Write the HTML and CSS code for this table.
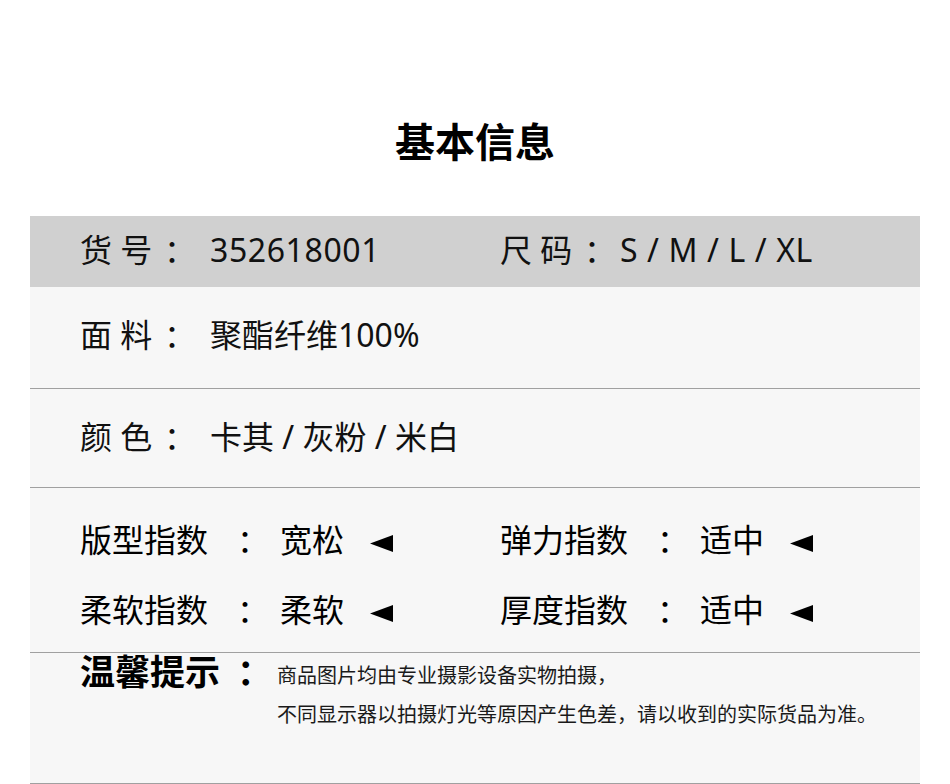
FILE: index.html
```html
<!DOCTYPE html>
<html lang="zh-CN">
<head>
<meta charset="utf-8">
<title>基本信息</title>
<link rel="stylesheet" href="styles.css">
</head>
<body>
<div class="page">
  <h1 class="title">基本信息</h1>
  <div class="panel">
    <div class="row row-head">
      <div class="cell cell-left">
        <span class="key">货 号</span><span class="colon">：</span><span class="val num">352618001</span>
      </div>
      <div class="cell">
        <span class="key">尺 码</span><span class="colon colon-tight">：</span><span class="val num">S / M / L / XL</span>
      </div>
    </div>
    <div class="row row-material">
      <span class="key">面 料</span><span class="colon">：</span><span class="val">聚酯纤维100%</span>
    </div>
    <div class="row row-color">
      <span class="key">颜 色</span><span class="colon">：</span><span class="val">卡其 / 灰粉 / 米白</span>
    </div>
    <div class="index">
      <div class="idx">
        <span class="idx-key">版型指数</span><span class="idx-colon">：</span><span class="idx-val">宽松</span>
        <svg class="arrow" width="23" height="17" viewBox="0 0 23 17"><polygon points="0,8.5 23,0 23,17"/></svg>
      </div>
      <div class="idx">
        <span class="idx-key">弹力指数</span><span class="idx-colon">：</span><span class="idx-val">适中</span>
        <svg class="arrow" width="23" height="17" viewBox="0 0 23 17"><polygon points="0,8.5 23,0 23,17"/></svg>
      </div>
      <div class="idx">
        <span class="idx-key">柔软指数</span><span class="idx-colon">：</span><span class="idx-val">柔软</span>
        <svg class="arrow" width="23" height="17" viewBox="0 0 23 17"><polygon points="0,8.5 23,0 23,17"/></svg>
      </div>
      <div class="idx">
        <span class="idx-key">厚度指数</span><span class="idx-colon">：</span><span class="idx-val">适中</span>
        <svg class="arrow" width="23" height="17" viewBox="0 0 23 17"><polygon points="0,8.5 23,0 23,17"/></svg>
      </div>
    </div>
    <div class="notice">
      <div class="notice-title">温馨提示<span class="notice-colon">：</span></div>
      <div class="notice-text">
        <p>商品图片均由专业摄影设备实物拍摄，</p>
        <p>不同显示器以拍摄灯光等原因产生色差，请以收到的实际货品为准。</p>
      </div>
    </div>
  </div>
</div>
</body>
</html>
```
FILE: styles.css
```css
html, body {
  margin: 0;
  background: #ffffff;
}
body {
  font-family: "Noto Sans", "Noto Sans CJK SC", sans-serif;
  color: #111111;
}
.page {
  padding: 0 30px;
}
.title {
  margin: 0 0 52px 0;
  padding-top: 116px;
  font-family: "Noto Sans CJK SC", sans-serif;
  font-size: 40px;
  line-height: 48px;
  font-weight: 700;
  text-align: center;
  color: #000000;
}
.panel {
  background: #f7f7f7;
}
.row {
  display: flex;
  align-items: center;
  box-sizing: border-box;
  padding-left: 50px;
  font-size: 32px;
  line-height: 40px;
  white-space: pre;
}
.row-head {
  background: #d0d0d0;
  height: 71px;
  padding-bottom: 4px;
}
.row-material {
  height: 102px;
  padding-bottom: 5px;
  border-bottom: 1px solid #a0a0a0;
}
.row-color {
  height: 99px;
  padding-bottom: 3px;
  border-bottom: 1px solid #a0a0a0;
}
.cell {
  display: flex;
  align-items: center;
}
.cell-left {
  width: 420px;
}
.key {
  display: inline-block;
  width: 84px;
}
.colon {
  display: inline-block;
  width: 46px;
}
.colon-tight {
  width: 36px;
}
.num {
  letter-spacing: 0.6px;
}
.index {
  box-sizing: border-box;
  height: 165px;
  padding: 17px 0 0 50px;
  border-bottom: 1px solid #a0a0a0;
  display: grid;
  grid-template-columns: 420px 1fr;
  grid-auto-rows: 70px;
  font-size: 32px;
  line-height: 40px;
  color: #000000;
}
.idx {
  display: flex;
  align-items: center;
}
.idx-key {
  width: 128px;
}
.idx-colon {
  margin-left: 29px;
  width: 32px;
}
.idx-val {
  margin-left: 11px;
}
.arrow {
  margin-left: 26px;
  margin-top: 6px;
  fill: #000000;
}
.notice {
  box-sizing: border-box;
  height: 131px;
  padding-left: 50px;
  border-bottom: 1px solid #a0a0a0;
  display: flex;
  align-items: flex-start;
}
.notice-title {
  margin-top: -1px;
  font-family: "Noto Sans CJK SC", sans-serif;
  font-size: 35px;
  line-height: 36px;
  font-weight: 700;
  color: #000000;
  white-space: nowrap;
}
.notice-colon {
  margin-left: 17px;
}
.notice-text {
  margin-left: 5px;
  padding-top: 2px;
  font-family: "Noto Sans CJK SC", sans-serif;
  font-size: 20px;
  line-height: 39px;
  color: #1a1a1a;
}
.notice-text p {
  margin: 0;
  white-space: nowrap;
}
```
